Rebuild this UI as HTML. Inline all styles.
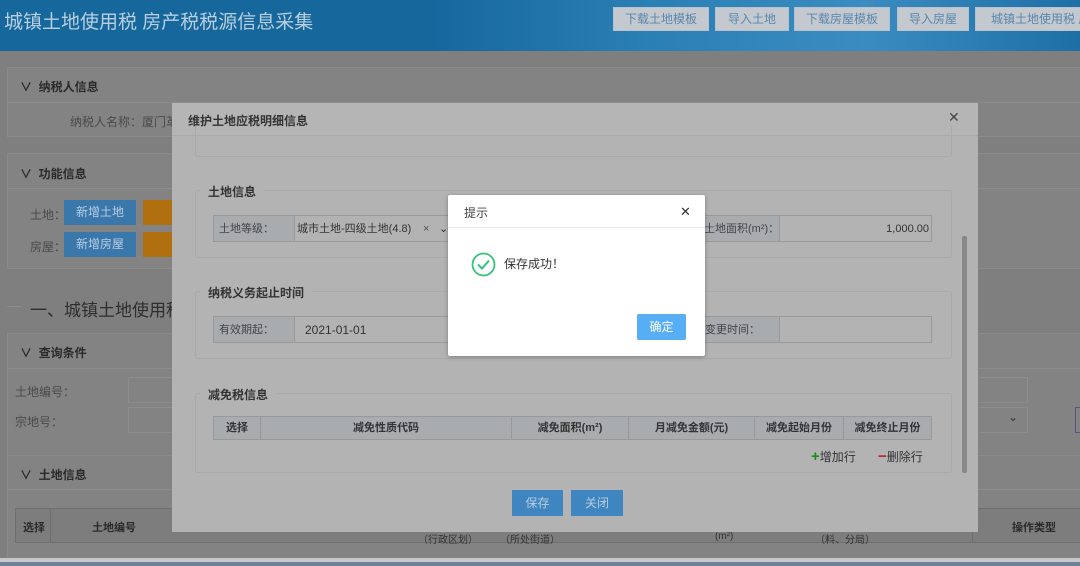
<!DOCTYPE html>
<html><head><meta charset="utf-8">
<style>
*{margin:0;padding:0;box-sizing:border-box}
body{width:1080px;height:566px;overflow:hidden;background:#7f7f7f;font-family:"Liberation Sans","Noto Sans CJK SC",sans-serif;font-size:12px;color:#333;position:relative}
.a{position:absolute;white-space:nowrap}
.hdr{left:0;top:0;width:1080px;height:51px;background:linear-gradient(90deg,#16679c 0%,#16679c 40%,#2a7fb5 60%,#3b8cc0 80%,#1d6fa6 100%)}
.hbtn{top:7px;height:24px;background:#c3c9cf;border:1px solid #b8c2cc;color:#5a87ad;font-size:12px;line-height:22px;text-align:center}
.panel{background:#838383;border:1px solid #8a8a8a}
.ptitle{font-weight:bold;color:#2a2a2a;font-size:12px}
.gray{color:#4a4a4a}
.btnb{background:#3a78ac;color:#b8cde0;text-align:center;line-height:25px;font-size:12px}
.btno{background:#b07010}
.modal{left:172px;top:103px;width:806px;height:429px;background:#b3b3b3}
.fs{border:1px solid #aaaaaa;border-radius:3px}
.leg{background:#b3b3b3;padding:0 8px;font-weight:bold;color:#333;font-size:12px}
.lab{background:#a8acaf;border:1px solid #999;color:#444;font-size:11px;line-height:26px;padding-left:5px}
.inp{background:#b3b3b3;border:1px solid #999;font-size:11px;line-height:26px;color:#333}
.th{background:#a8acaf;border:1px solid #999;text-align:center;font-weight:bold;font-size:11px;line-height:22px;color:#333}
</style></head><body>
<div class="a hdr"></div>
<div class="a" style="left:4px;top:7px;font-size:19px;color:#b9cfe0">城镇土地使用税 房产税税源信息采集</div>
<div class="a hbtn" style="left:613px;width:96px">下载土地模板</div>
<div class="a hbtn" style="left:715px;width:74px">导入土地</div>
<div class="a hbtn" style="left:794px;width:96px">下载房屋模板</div>
<div class="a hbtn" style="left:897px;width:72px">导入房屋</div>
<div class="a hbtn" style="left:975px;width:110px;text-align:left;padding-left:15px;overflow:hidden">城镇土地使用税 房</div>

<div class="a panel" style="left:7px;top:67px;width:1080px;height:70px"></div>
<div class="a" style="left:7px;top:102px;width:1080px;height:1px;background:#8c8c8c"></div>
<div class="a ptitle" style="left:20px;top:78px">∨&nbsp; 纳税人信息</div>
<div class="a gray" style="left:70px;top:113px">纳税人名称：厦门革</div>
<div class="a panel" style="left:7px;top:153px;width:1080px;height:116px"></div>
<div class="a" style="left:7px;top:188px;width:1080px;height:1px;background:#8c8c8c"></div>
<div class="a ptitle" style="left:20px;top:165px">∨&nbsp; 功能信息</div>
<div class="a gray" style="left:30px;top:206px">土地：</div>
<div class="a gray" style="left:30px;top:238px">房屋：</div>
<div class="a btnb" style="left:64px;top:200px;width:72px;height:25px">新增土地</div>
<div class="a btnb" style="left:64px;top:232px;width:72px;height:25px">新增房屋</div>
<div class="a btnb btno" style="left:143px;top:200px;width:30px;height:25px"></div>
<div class="a btnb btno" style="left:143px;top:232px;width:30px;height:25px"></div>
<div class="a" style="left:7px;top:306px;width:15px;height:1px;background:#8c8c8c"></div>
<div class="a" style="left:30px;top:296px;font-size:17px;color:#2e2e2e">一、城镇土地使用税</div>
<div class="a panel" style="left:7px;top:333px;width:1080px;height:126px"></div>
<div class="a" style="left:7px;top:368px;width:1080px;height:1px;background:#8c8c8c"></div>
<div class="a ptitle" style="left:20px;top:344px">∨&nbsp; 查询条件</div>
<div class="a gray" style="left:15px;top:383px">土地编号：</div>
<div class="a gray" style="left:15px;top:413px">宗地号：</div>
<div class="a" style="left:128px;top:377px;width:50px;height:26px;border:1px solid #8d8d8d"></div>
<div class="a" style="left:128px;top:407px;width:50px;height:26px;border:1px solid #8d8d8d"></div>
<div class="a" style="left:980px;top:377px;width:48px;height:26px;border:1px solid #8d8d8d;border-left:none"></div>
<div class="a" style="left:980px;top:407px;width:48px;height:26px;border:1px solid #8d8d8d;border-left:none"></div>
<div class="a" style="left:1008px;top:410px;color:#333">⌄</div>
<div class="a" style="left:1075px;top:407px;width:10px;height:26px;border:1px solid #557"></div>
<div class="a panel" style="left:7px;top:455px;width:1080px;height:110px"></div>
<div class="a" style="left:7px;top:489px;width:1080px;height:1px;background:#8c8c8c"></div>
<div class="a ptitle" style="left:20px;top:466px">∨&nbsp; 土地信息</div>
<div class="a" style="left:15px;top:508px;width:1070px;height:35px;border:1px solid #6f6f6f;background:#7d7d7d"></div>
<div class="a" style="left:50px;top:508px;width:1px;height:35px;background:#6f6f6f"></div>
<div class="a ptitle" style="left:23px;top:519px;font-size:11px">选择</div>
<div class="a ptitle" style="left:92px;top:519px;font-size:11px">土地编号</div>
<div class="a ptitle" style="left:1012px;top:519px;font-size:11px">操作类型</div>
<div class="a" style="left:972px;top:508px;width:1px;height:35px;background:#6f6f6f"></div>
<div class="a" style="left:418px;top:531px;font-size:10px;color:#333">（行政区划）</div>
<div class="a" style="left:500px;top:531px;font-size:10px;color:#333">（所处街道）</div>
<div class="a" style="left:715px;top:531px;font-size:10px;color:#333">(m²)</div>
<div class="a" style="left:815px;top:531px;font-size:10px;color:#333">（料、分局）</div>
<div class="a" style="left:0;top:558px;width:1080px;height:8px;background:#c8c8c8"></div>
<div class="a" style="left:0;top:562px;width:1080px;height:4px;background:#6d8399"></div>

<div class="a modal"></div>
<div class="a" style="left:172px;top:103px;width:806px;height:33px;border-bottom:1px solid #aaa;background:#b5b5b5"></div>
<div class="a" style="left:188px;top:112px;font-weight:bold;color:#333;font-size:12px">维护土地应税明细信息</div>
<div class="a" style="left:948px;top:109px;font-size:14px;color:#444">✕</div>
<div class="a fs" style="left:195px;top:125px;width:757px;height:32px;border-top:none"></div>
<div class="a" style="left:962px;top:236px;width:5px;height:237px;background:#888;border-radius:2px"></div>

<div class="a fs" style="left:195px;top:190px;width:757px;height:68px"></div>
<div class="a leg" style="left:200px;top:183px">土地信息</div>
<div class="a lab" style="left:213px;top:215px;width:82px;height:27px">土地等级：</div>
<div class="a inp" style="left:294px;top:215px;width:160px;height:27px;padding-left:2px">城市土地-四级土地(4.8)<span style="position:absolute;left:128px;color:#555">×</span><span style="position:absolute;left:144px;color:#333">⌄</span></div>
<div class="a lab" style="left:690px;top:215px;width:90px;height:27px;padding-left:14px;border-left:none">土地面积(m²)：</div>
<div class="a inp" style="left:779px;top:215px;width:153px;height:27px;text-align:right;padding-right:2px">1,000.00</div>

<div class="a fs" style="left:195px;top:291px;width:757px;height:68px"></div>
<div class="a leg" style="left:200px;top:284px">纳税义务起止时间</div>
<div class="a lab" style="left:213px;top:316px;width:82px;height:27px">有效期起：</div>
<div class="a inp" style="left:294px;top:316px;width:160px;height:27px;padding-left:10px;font-size:12px">2021-01-01</div>
<div class="a lab" style="left:700px;top:316px;width:80px;height:27px;border-left:none">变更时间：</div>
<div class="a inp" style="left:779px;top:316px;width:153px;height:27px"></div>

<div class="a fs" style="left:195px;top:393px;width:757px;height:80px"></div>
<div class="a leg" style="left:200px;top:386px">减免税信息</div>
<div class="a th" style="left:213px;top:416px;width:48px;height:24px">选择</div>
<div class="a th" style="left:260px;top:416px;width:252px;height:24px">减免性质代码</div>
<div class="a th" style="left:511px;top:416px;width:118px;height:24px">减免面积(m²)</div>
<div class="a th" style="left:628px;top:416px;width:127px;height:24px">月减免金额(元)</div>
<div class="a th" style="left:754px;top:416px;width:90px;height:24px">减免起始月份</div>
<div class="a th" style="left:843px;top:416px;width:89px;height:24px">减免终止月份</div>
<div class="a" style="left:811px;top:448px;font-size:12px;color:#333"><b style="color:#1a8a1a;font-size:15px">+</b>增加行</div>
<div class="a" style="left:878px;top:448px;font-size:12px;color:#333"><b style="color:#c02020;font-size:15px">−</b>删除行</div>
<div class="a btnb" style="left:512px;top:490px;width:51px;height:26px;line-height:26px;background:#3f85c0">保存</div>
<div class="a btnb" style="left:571px;top:490px;width:52px;height:26px;line-height:26px;background:#3f85c0">关闭</div>

<div class="a" style="left:448px;top:195px;width:257px;height:161px;background:#fff;border-radius:2px;box-shadow:0 1px 4px rgba(0,0,0,.3)"></div>
<div class="a" style="left:448px;top:227px;width:257px;height:1px;background:#e8e8e8"></div>
<div class="a" style="left:464px;top:204px;font-size:12px;color:#444">提示</div>
<div class="a" style="left:680px;top:204px;font-size:13px;color:#333">✕</div>
<svg class="a" style="left:471px;top:252px" width="25" height="25" viewBox="0 0 25 25"><circle cx="12.5" cy="12.5" r="11" fill="none" stroke="#35c27a" stroke-width="1.8"/><path d="M7 12.5l4 4 7-8" fill="none" stroke="#35c27a" stroke-width="2"/></svg>
<div class="a" style="left:504px;top:255px;font-size:12px;color:#333">保存成功！</div>
<div class="a" style="left:637px;top:314px;width:49px;height:26px;background:#57aef5;border-radius:2px;color:#fff;text-align:center;line-height:26px;font-size:12px">确定</div>
</body></html>
